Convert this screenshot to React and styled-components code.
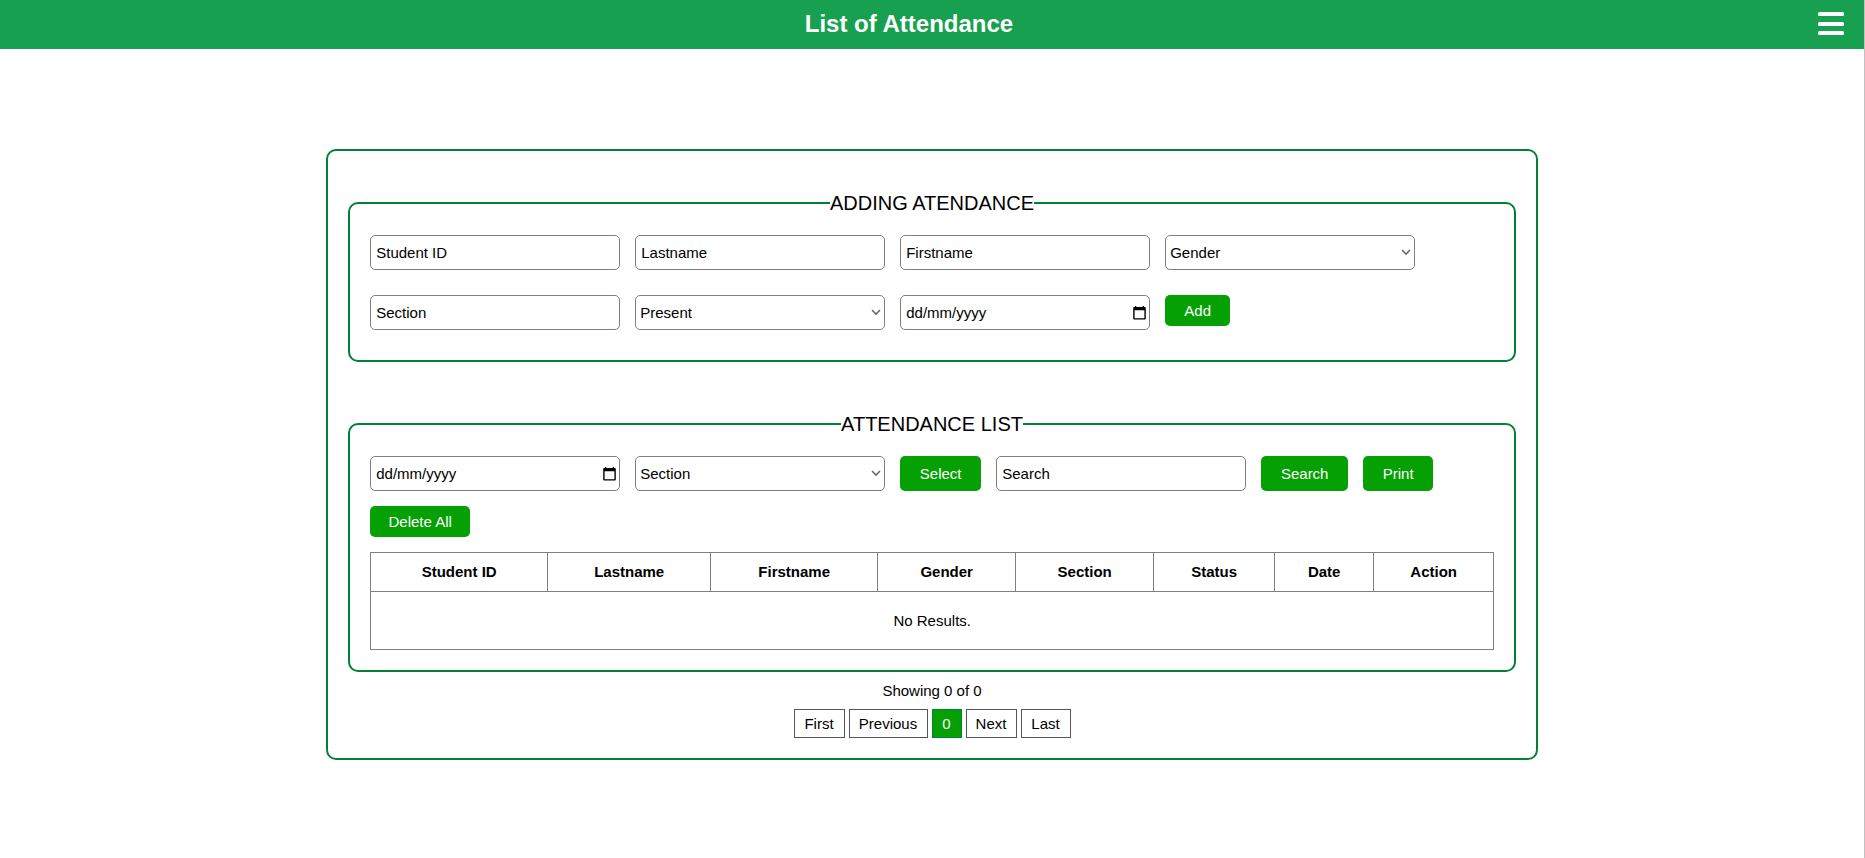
import React from "react";
import styled, { createGlobalStyle, css } from "styled-components";

const GlobalStyle = createGlobalStyle`
  * { box-sizing: border-box; }
  html { background: #fff; }
  body {
    margin: 0;
    color: #000;
    font-family: "Liberation Sans", Arial, sans-serif;
    font-size: 15px;
  }
`;

const Page = styled.div`
  min-height: 100vh;
  border-right: 1px solid #c1c1c1;
`;

const Header = styled.header`
  display: flex;
  align-items: center;
  height: 49px;
  padding: 0 20px 2px 0;
  background: #17a04f;
  color: #fff;
`;

const Title = styled.h1`
  flex: 1;
  margin: 0;
  font-size: 24px;
  line-height: 28px;
  text-align: center;
`;

const MenuButton = styled.button`
  display: flex;
  padding: 0;
  border: 0;
  background: none;
  color: inherit;
  cursor: pointer;
`;

const Main = styled.main`
  width: 65%;
  margin: 100px auto 0;
  padding: 20px;
  border: 2px solid #008236;
  border-radius: 10px;
`;

const Panel = styled.fieldset`
  min-width: 0;
  margin: 20px 0 0;
  padding: 20px;
  border: 2px solid #008236;
  border-radius: 10px;

  & + & { margin-top: 50px; }
`;

const PanelTitle = styled.legend`
  margin: 0 auto;
  padding: 0;
  font-size: 20px;
  line-height: 24px;
`;

const Controls = styled.div`
  display: flex;
  flex-wrap: wrap;
  gap: ${(p) => (p.$loose ? "25px 15px" : "15px")};
  align-items: ${(p) => (p.$loose ? "flex-start" : "stretch")};
  margin-bottom: ${(p) => (p.$loose ? "10px" : "15px")};
`;

const boxStyle = css`
  width: 250px;
  height: 35px;
  border: 1px solid #808080;
  border-radius: 5px;
  background-color: #fff;
  color: #000;
  font-family: inherit;
  font-size: 15px;
`;

const Field = styled.input`
  ${boxStyle}
  padding: 5px;
  &::placeholder { color: #000; opacity: 1; }
`;

const DateBox = styled.div`
  ${boxStyle}
  display: flex;
  align-items: center;
  padding: 0 3px 0 5px;
`;

const DateInput = styled.input`
  flex: 1;
  min-width: 0;
  padding: 0;
  border: 0;
  outline: 0;
  background: none;
  font-family: inherit;
  font-size: 15px;
  &::placeholder { color: #000; opacity: 1; }
`;

const DateButton = styled.button`
  display: flex;
  padding: 0;
  border: 0;
  background: none;
  color: #000;
  cursor: pointer;
`;

const SelectBox = styled.div`
  position: relative;

  svg {
    position: absolute;
    top: 14px;
    right: 4px;
    color: #6b6b6b;
    pointer-events: none;
  }
`;

const NativeSelect = styled.select`
  ${boxStyle}
  appearance: none;
  padding: 0 20px 0 4px;
`;

const Button = styled.button`
  width: ${(p) => p.$width}px;
  min-height: 31px;
  padding: 0;
  border: 0;
  border-radius: 5px;
  background: #04a004;
  color: #fff;
  font-family: inherit;
  font-size: 15px;
  line-height: 17px;
  cursor: pointer;
`;

const Table = styled.table`
  width: 100%;
  border-collapse: collapse;
  table-layout: fixed;
  text-align: center;

  th, td { border: 1px solid #808080; }
  th { padding: 10px; line-height: 18px; }
  td { padding: 20px; line-height: 17px; }
`;

const Column = styled.col`
  width: ${(p) => p.$width}px;
`;

const Summary = styled.p`
  margin: 10px 0;
  line-height: 17px;
  text-align: center;
`;

const Pager = styled.nav`
  display: flex;
  justify-content: center;
  gap: 4px;
`;

const PageButton = styled.button`
  width: ${(p) => p.$width}px;
  padding: 5px 0;
  border: 1px solid ${(p) => (p.$active ? "#008236" : "#555")};
  background: ${(p) => (p.$active ? "#04a004" : "#fff")};
  color: ${(p) => (p.$active ? "#fff" : "#000")};
  font-family: inherit;
  font-size: 15px;
  line-height: 17px;
  cursor: pointer;
`;

const columns = [
  { name: "Student ID", width: 177 },
  { name: "Lastname", width: 163 },
  { name: "Firstname", width: 167 },
  { name: "Gender", width: 138 },
  { name: "Section", width: 138 },
  { name: "Status", width: 121 },
  { name: "Date", width: 99 },
  { name: "Action", width: 120 },
];

const pages = [
  { name: "First", width: 51 },
  { name: "Previous", width: 79 },
  { name: "0", width: 30 },
  { name: "Next", width: 51 },
  { name: "Last", width: 50 },
];

function DateField({ label }) {
  return (
    <DateBox>
      <DateInput aria-label={label} placeholder="dd/mm/yyyy" inputMode="numeric" />
      <DateButton type="button" aria-label="Show date picker">
        <svg width="13" height="14" viewBox="0 0 13 14" aria-hidden="true">
          <path
            fill="currentColor"
            fillRule="evenodd"
            d="M2 0h1.3v1h6.4V0H11v1h.8q1 0 1 1v10.6q0 1-1 1H1.2q-1 0-1-1V2q0-1 1-1H2zM1.6 4.2v8h9.8v-8z"
          />
        </svg>
      </DateButton>
    </DateBox>
  );
}

function Select({ label, value }) {
  return (
    <SelectBox>
      <NativeSelect aria-label={label}>
        <option>{value}</option>
      </NativeSelect>
      <svg width="10" height="7" viewBox="0 0 10 7" fill="none" aria-hidden="true">
        <path d="M1 1l4 4 4-4" stroke="currentColor" strokeWidth="1.6" />
      </svg>
    </SelectBox>
  );
}

export default function App() {
  return (
    <Page>
      <GlobalStyle />
      <Header>
        <Title>List of Attendance</Title>
        <MenuButton type="button" aria-label="Open menu">
          <svg width="26" height="23" viewBox="0 0 26 23" fill="currentColor" aria-hidden="true">
            <rect width="26" height="4" rx="1.5" />
            <rect y="10" width="26" height="4" rx="1.5" />
            <rect y="19" width="26" height="4" rx="1.5" />
          </svg>
        </MenuButton>
      </Header>
      <Main>
        <Panel>
          <PanelTitle>ADDING ATENDANCE</PanelTitle>
          <Controls $loose>
            <Field aria-label="Student ID" placeholder="Student ID" />
            <Field aria-label="Lastname" placeholder="Lastname" />
            <Field aria-label="Firstname" placeholder="Firstname" />
            <Select label="Gender" value="Gender" />
            <Field aria-label="Section" placeholder="Section" />
            <Select label="Status" value="Present" />
            <DateField label="Date" />
            <Button type="button" $width={65}>Add</Button>
          </Controls>
        </Panel>
        <Panel>
          <PanelTitle>ATTENDANCE LIST</PanelTitle>
          <Controls>
            <DateField label="Filter by date" />
            <Select label="Filter by section" value="Section" />
            <Button type="button" $width={81}>Select</Button>
            <Field aria-label="Search" placeholder="Search" />
            <Button type="button" $width={87}>Search</Button>
            <Button type="button" $width={70}>Print</Button>
            <Button type="button" $width={100}>Delete All</Button>
          </Controls>
          <Table>
            <colgroup>
              {columns.map((c) => <Column key={c.name} $width={c.width} />)}
            </colgroup>
            <thead>
              <tr>{columns.map((c) => <th key={c.name} scope="col">{c.name}</th>)}</tr>
            </thead>
            <tbody>
              <tr><td colSpan={columns.length}>No Results.</td></tr>
            </tbody>
          </Table>
        </Panel>
        <Summary>Showing 0 of 0</Summary>
        <Pager aria-label="Pagination">
          {pages.map((p) => (
            <PageButton key={p.name} type="button" $width={p.width} $active={p.name === "0"}>
              {p.name}
            </PageButton>
          ))}
        </Pager>
      </Main>
    </Page>
  );
}
